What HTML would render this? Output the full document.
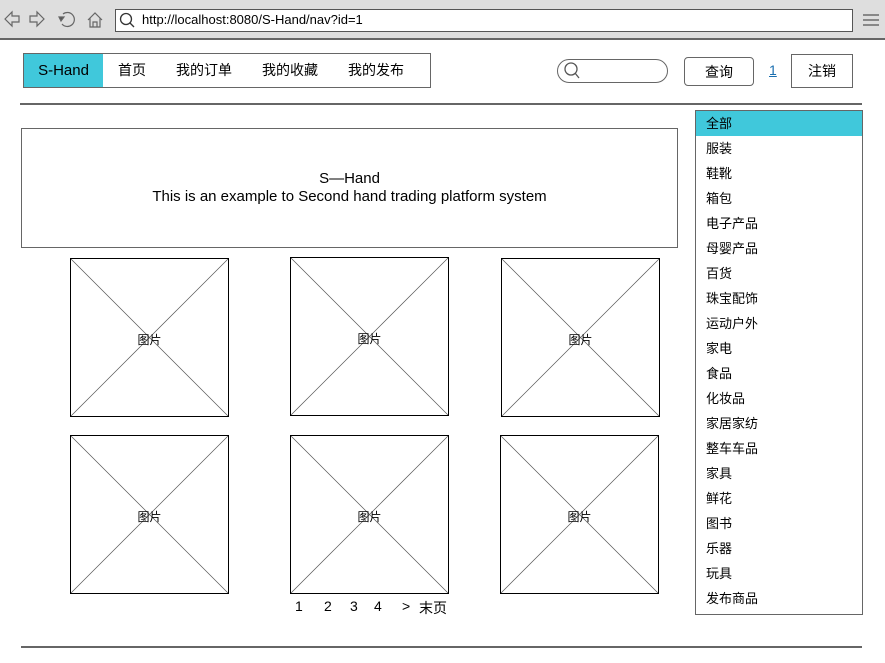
<!DOCTYPE html>
<html><head><meta charset="utf-8"><style>
*{margin:0;padding:0;box-sizing:border-box}
body{width:885px;height:663px;background:#fff;position:relative;overflow:hidden;font-family:"Liberation Sans","Noto Sans CJK SC",sans-serif;font-size:14px;color:#000}
.a{position:absolute}
.img{position:absolute;width:159px;height:159px;border:1px solid #000}
.img svg{position:absolute;left:0;top:0}
.img span{position:absolute;left:0;right:0;top:72px;text-align:center;font-size:12px;background:transparent}
.cat div{height:25px;line-height:25px;padding-left:10px;font-size:13px}
</style></head><body>
<div class="a" style="left:0;top:0;width:885px;height:40px;background:#dedede;border-bottom:2px solid #666"></div>
<svg class="a" style="left:0;top:0" width="110" height="40" fill="none" stroke="#666" stroke-width="1.2">
<path d="M5 19 L12 12 L12 16 L19 16 L19 22 L12 22 L12 26 Z"/>
<path d="M44 19 L37 12 L37 16 L30 16 L30 22 L37 22 L37 26 Z"/>
<path d="M63 14 A7 7 0 1 1 62 24"/><path d="M59 17 L64 17 L61 21 Z" fill="#555"/>
<path d="M88 20 L95 13 L102 20 M90 18 L90 27 L100 27 L100 18 M93 27 L93 22 L97 22 L97 27"/>
</svg>
<div class="a" style="left:115px;top:9px;width:738px;height:23px;background:#fff;border:1px solid #555"></div>
<svg class="a" style="left:118px;top:11px" width="20" height="20" fill="none" stroke="#333" stroke-width="1.3"><circle cx="8" cy="8" r="5.5"/><path d="M12 12 L16 16"/></svg>
<div class="a" style="left:142px;top:11px;font-size:13px;line-height:18px">http://localhost:8080/S-Hand/nav?id=1</div>
<svg class="a" style="left:862px;top:13px" width="18" height="14" stroke="#555" stroke-width="1.3"><path d="M1 2H17M1 7H17M1 12H17"/></svg>

<div class="a" style="left:23px;top:53px;width:408px;height:35px;border:1px solid #666"></div>
<div class="a" style="left:24px;top:54px;width:79px;height:33px;background:#40c8db;line-height:33px;text-align:center;font-size:15px">S-Hand</div>
<div class="a" style="left:118px;top:54px;line-height:33px">首页</div>
<div class="a" style="left:176px;top:54px;line-height:33px">我的订单</div>
<div class="a" style="left:262px;top:54px;line-height:33px">我的收藏</div>
<div class="a" style="left:348px;top:54px;line-height:33px">我的发布</div>

<div class="a" style="left:557px;top:59px;width:111px;height:24px;border:1px solid #666;border-radius:12px"></div>
<svg class="a" style="left:562px;top:61px" width="20" height="20" fill="none" stroke="#555" stroke-width="1.3"><circle cx="9" cy="8" r="6"/><path d="M13 12 L17 17"/></svg>
<div class="a" style="left:684px;top:57px;width:70px;height:29px;border:1px solid #666;border-radius:4px;text-align:center;line-height:28px">查询</div>
<div class="a" style="left:769px;top:62px;color:#1a6fb0;text-decoration:underline">1</div>
<div class="a" style="left:791px;top:54px;width:62px;height:34px;border:1px solid #666;text-align:center;line-height:32px">注销</div>

<div class="a" style="left:20px;top:103px;width:842px;height:2px;background:#666"></div>

<div class="a" style="left:21px;top:128px;width:657px;height:120px;border:1px solid #666;text-align:center;padding-top:41px;line-height:18px;font-size:15px">S—Hand<br>This is an example to Second hand trading platform system</div>

<div class="a cat" style="left:695px;top:110px;width:168px;height:505px;border:1px solid #666">
<div style="background:#40c8db">全部</div><div>服装</div><div>鞋靴</div><div>箱包</div><div>电子产品</div><div>母婴产品</div><div>百货</div><div>珠宝配饰</div><div>运动户外</div><div>家电</div><div>食品</div><div>化妆品</div><div>家居家纺</div><div>整车车品</div><div>家具</div><div>鲜花</div><div>图书</div><div>乐器</div><div>玩具</div><div>发布商品</div>
</div>

<div class="img" style="left:70px;top:258px"><svg width="157" height="157" stroke="#555" stroke-width=".7"><path d="M0 0L157 157M157 0L0 157"/></svg><span>图片</span></div>
<div class="img" style="left:290px;top:257px"><svg width="157" height="157" stroke="#555" stroke-width=".7"><path d="M0 0L157 157M157 0L0 157"/></svg><span>图片</span></div>
<div class="img" style="left:501px;top:258px"><svg width="157" height="157" stroke="#555" stroke-width=".7"><path d="M0 0L157 157M157 0L0 157"/></svg><span>图片</span></div>
<div class="img" style="left:70px;top:435px"><svg width="157" height="157" stroke="#555" stroke-width=".7"><path d="M0 0L157 157M157 0L0 157"/></svg><span>图片</span></div>
<div class="img" style="left:290px;top:435px"><svg width="157" height="157" stroke="#555" stroke-width=".7"><path d="M0 0L157 157M157 0L0 157"/></svg><span>图片</span></div>
<div class="img" style="left:500px;top:435px"><svg width="157" height="157" stroke="#555" stroke-width=".7"><path d="M0 0L157 157M157 0L0 157"/></svg><span>图片</span></div>

<div class="a" style="left:295px;top:598px;font-size:14px">1</div>
<div class="a" style="left:324px;top:598px">2</div>
<div class="a" style="left:350px;top:598px">3</div>
<div class="a" style="left:374px;top:598px">4</div>
<div class="a" style="left:402px;top:598px">&gt;</div>
<div class="a" style="left:419px;top:598px">末页</div>

<div class="a" style="left:21px;top:646px;width:841px;height:2px;background:#666"></div>
</body></html>
